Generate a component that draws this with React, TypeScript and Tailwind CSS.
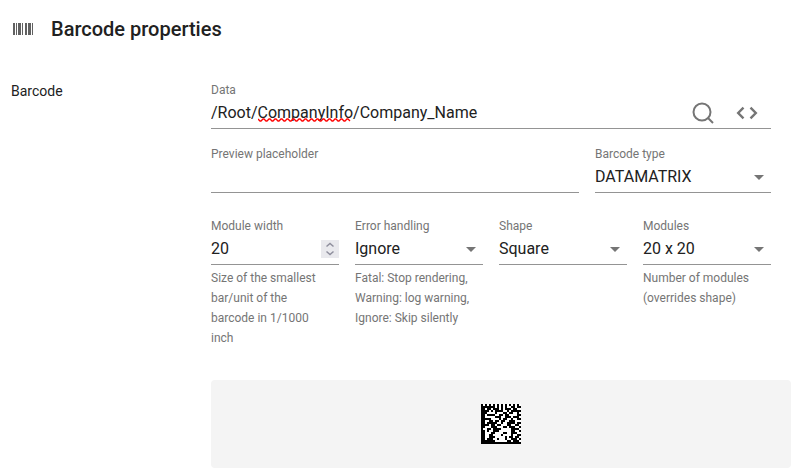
import { useId, useState } from "react";
import type { ReactNode } from "react";

const MODULES = [
  "10101010101010101010",
  "11111110101010011011",
  "11011011101011101100",
  "11110101111001011111",
  "11100001000110110010",
  "11011110011011000011",
  "11000001110011101110",
  "11111000010110010011",
  "11001101101100111000",
  "11011111001001111011",
  "11110110110001100110",
  "11000111000110111001",
  "10011011110000011110",
  "11010011100000011001",
  "11000110000110011100",
  "11001100001000010011",
  "11001110000010110110",
  "11011100100010011101",
  "11111110000001101110",
  "11111111111111111111",
];

const UNDERLINE = "w-full border-b border-[#949494]";

type FieldProps = {
  label: string;
  hint?: string[];
  className?: string;
  children: (id: string) => ReactNode;
};

function Field({ label, hint, className = "", children }: FieldProps) {
  const id = useId();
  return (
    <div className={`min-w-0 pt-px ${className}`}>
      <label htmlFor={id} className="block text-xs leading-4 text-[#757575]">
        {label}
      </label>
      {children(id)}
      {hint && (
        <p className="pt-[3px] text-xs leading-5 text-[#757575]">
          {hint.map((line) => (
            <span key={line} className="block">
              {line}
            </span>
          ))}
        </p>
      )}
    </div>
  );
}

function SelectField({
  options,
  ...field
}: Omit<FieldProps, "children"> & { options: string[] }) {
  return (
    <Field {...field}>
      {(id) => (
        <div className={`relative ${UNDERLINE}`}>
          <select id={id} className="block h-[30px] w-full appearance-none bg-transparent pr-6 outline-none">
            {options.map((option) => (
              <option key={option}>{option}</option>
            ))}
          </select>
          <svg
            viewBox="0 0 10 5"
            className="pointer-events-none absolute top-[13px] right-[7px] h-[5px] w-[10px] fill-[#757575]"
          >
            <path d="M0 0h10L5 5z" />
          </svg>
        </div>
      )}
    </Field>
  );
}

export default function App() {
  const [data, setData] = useState("/Root/CompanyInfo/Company_Name");
  const [width, setWidth] = useState(20);

  return (
    <main className="bg-white pr-[11px] pb-1 pl-[11px] font-[Roboto,sans-serif] text-base text-[#212121]">
      <header className="flex items-center gap-[18px] pt-[15px] pl-[2px]">
        <svg viewBox="2 6 20 12" className="h-3 w-5 fill-[#616161]" shapeRendering="crispEdges">
          <path d="M2 6h2v12H2zM5 6h1v12H5zM7 6h3v12H7zM11 6h1v12h-1zM14 6h2v12h-2zM17 6h3v12h-3zM21 6h1v12h-1z" />
        </svg>
        <h1 className="text-xl leading-7 font-medium">Barcode properties</h1>
      </header>

      <div className="flex pt-[38px]">
        <h2 className="w-[200px] shrink-0 text-sm leading-5">Barcode</h2>

        <div className="min-w-0 flex-1">
          <div className="flex flex-col gap-4 pr-5">
            <Field label="Data">
              {(id) => (
                <div className={`flex items-center pr-3 ${UNDERLINE}`}>
                  <div className="relative min-w-0 flex-1">
                    <input
                      id={id}
                      value={data}
                      spellCheck={false}
                      onChange={(e) => setData(e.target.value)}
                      className="block h-[30px] w-full pb-0.5 outline-none"
                    />
                    {/* Spelling mark */}
                    <svg
                      viewBox="0 0 98 4"
                      className="pointer-events-none absolute top-[20px] left-[47px] h-1 w-[98px] fill-none stroke-[#f00]"
                      strokeWidth="1.3"
                    >
                      <path d="M0 1l2 2h1l2-2h1l2 2h1l2-2h1l2 2h1l2-2h1l2 2h1l2-2h1l2 2h1l2-2h1l2 2h1l2-2h1l2 2h1l2-2h1l2 2h1l2-2h1l2 2h1l2-2h1l2 2h1l2-2h1l2 2h1l2-2h1l2 2h1l2-2h1l2 2h1l2-2h1l2 2h1l2-2h1l2 2h1l2-2h1l2 2" />
                    </svg>
                  </div>
                  <div className="flex gap-5 text-[#757575]">
                    <button type="button" aria-label="Search" className="size-6">
                      <svg viewBox="0 0 24 24" fill="none" stroke="currentColor" strokeWidth="2">
                        <circle cx="11" cy="11" r="8.5" />
                        <path d="m17 17 5 5" />
                      </svg>
                    </button>
                    <button type="button" aria-label="Edit expression" className="size-6">
                      <svg viewBox="0 0 24 24" fill="none" stroke="currentColor" strokeWidth="2.4">
                        <path d="M8.500 6.700 3.200 12l5.300 5.300M15.500 6.700 20.800 12l-5.300 5.300" />
                      </svg>
                    </button>
                  </div>
                </div>
              )}
            </Field>

            <div className="flex gap-4">
              <Field label="Preview placeholder" className="flex-1">
                {(id) => <input id={id} className={`block h-[31px] pb-0.5 outline-none ${UNDERLINE}`} />}
              </Field>
              <SelectField label="Barcode type" options={["DATAMATRIX"]} className="w-44" />
            </div>

            <div className="grid grid-cols-4 gap-4 pt-2">
              <Field
                label="Module width"
                hint={["Size of the smallest", "bar/unit of the", "barcode in 1/1000", "inch"]}
              >
                {(id) => (
                  <div className={`flex items-center ${UNDERLINE}`}>
                    <input
                      id={id}
                      inputMode="numeric"
                      value={width}
                      onChange={(e) => setWidth(Number(e.target.value) || 0)}
                      className="block h-[30px] w-0 flex-1 pb-0.5 outline-none"
                    />
                    <div className="flex h-[18px] w-[18px] flex-col bg-[#e9e9ed] text-[#8f8f9d]">
                      <button type="button" aria-label="Increase" onClick={() => setWidth(width + 1)}>
                        <svg viewBox="0 0 18 9" fill="none" stroke="currentColor" strokeWidth="1.5">
                          <path d="m5.500 6.500 3.500-3 3.500 3" />
                        </svg>
                      </button>
                      <button type="button" aria-label="Decrease" onClick={() => setWidth(width - 1)}>
                        <svg viewBox="0 0 18 9" fill="none" stroke="currentColor" strokeWidth="1.5">
                          <path d="m5.500 2.500 3.500 3 3.500-3" />
                        </svg>
                      </button>
                    </div>
                  </div>
                )}
              </Field>
              <SelectField
                label="Error handling"
                options={["Ignore", "Warning", "Fatal"]}
                hint={["Fatal: Stop rendering,", "Warning: log warning,", "Ignore: Skip silently"]}
              />
              <SelectField label="Shape" options={["Square", "Rectangle"]} />
              <SelectField
                label="Modules"
                options={["20 x 20"]}
                hint={["Number of modules", "(overrides shape)"]}
              />
            </div>
          </div>

          {/* Preview */}
          <div className="mt-8 flex justify-center rounded bg-[#f4f4f4] py-6">
            <svg
              viewBox="0 0 20 20"
              role="img"
              aria-label="Data Matrix preview"
              className="size-10 bg-white"
              shapeRendering="crispEdges"
            >
              {MODULES.map((row, y) =>
                [...row].map((bit, x) =>
                  bit === "1" ? <rect key={`${x}-${y}`} x={x} y={y} width="1" height="1" /> : null
                )
              )}
            </svg>
          </div>
        </div>
      </div>
    </main>
  );
}
